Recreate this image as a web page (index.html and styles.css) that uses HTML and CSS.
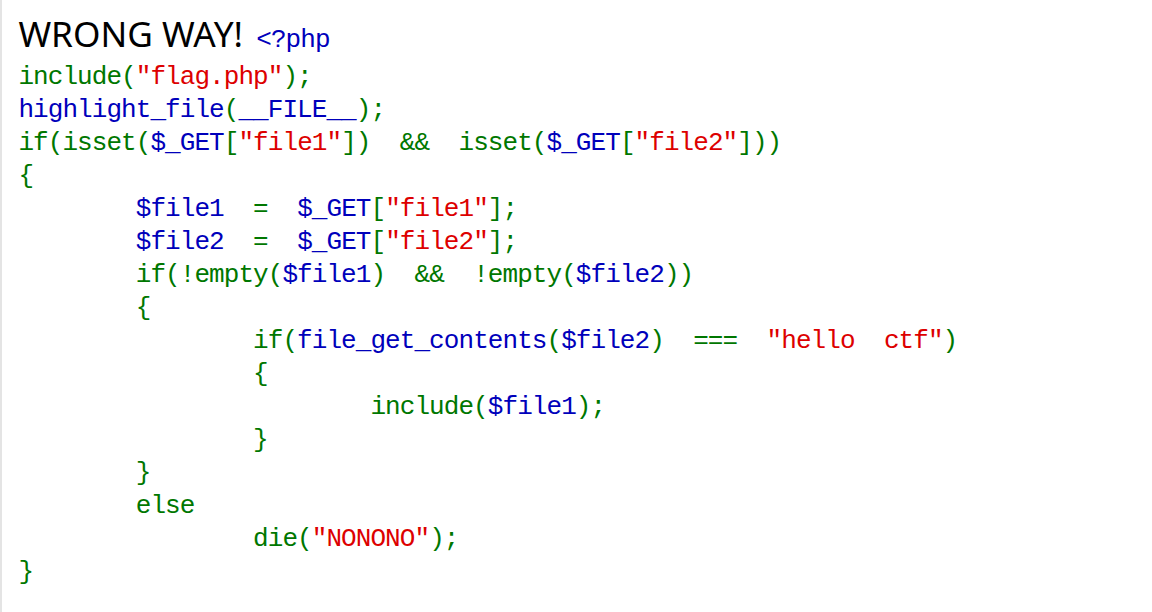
FILE: index.html
```html
<!DOCTYPE html>
<html lang="en">
<head>
<meta charset="utf-8">
<title>WRONG WAY!</title>
<link rel="stylesheet" href="styles.css">
</head>
<body>
<div class="out"><span class="msg">WRONG WAY! </span><code class="src"><span class="d">&lt;?php</span>
<span class="k">include(</span><span class="s">"flag.php"</span><span class="k">);</span>
<span class="d">highlight_file</span><span class="k">(</span><span class="d">__FILE__</span><span class="k">);</span>
<span class="k">if(isset(</span><span class="d">$_GET</span><span class="k">[</span><span class="s">"file1"</span><span class="k">]) &amp;&amp; isset(</span><span class="d">$_GET</span><span class="k">[</span><span class="s">"file2"</span><span class="k">]))</span>
<span class="k">{</span>
<span class="k">    </span><span class="d">$file1</span><span class="k"> = </span><span class="d">$_GET</span><span class="k">[</span><span class="s">"file1"</span><span class="k">];</span>
<span class="k">    </span><span class="d">$file2</span><span class="k"> = </span><span class="d">$_GET</span><span class="k">[</span><span class="s">"file2"</span><span class="k">];</span>
<span class="k">    if(!empty(</span><span class="d">$file1</span><span class="k">) &amp;&amp; !empty(</span><span class="d">$file2</span><span class="k">))</span>
<span class="k">    {</span>
<span class="k">        if(</span><span class="d">file_get_contents</span><span class="k">(</span><span class="d">$file2</span><span class="k">) === </span><span class="s">"hello ctf"</span><span class="k">)</span>
<span class="k">        {</span>
<span class="k">            include(</span><span class="d">$file1</span><span class="k">);</span>
<span class="k">        }</span>
<span class="k">    }</span>
<span class="k">    else</span>
<span class="k">        die(</span><span class="s">"NONONO"</span><span class="k">);</span>
<span class="k">}</span></code></div>
</body>
</html>
```
FILE: styles.css
```css
html {
  background: #ffffff;
}

body {
  margin: 0;
  min-height: 612px;
  box-sizing: border-box;
  border-left: 2px solid #e4e4e4;
}

.out {
  padding: 6px 0 0 16.4px;
  font-family: "Liberation Mono", monospace;
  font-size: 26px;
  line-height: 33px;
  letter-spacing: -0.933px;
  word-spacing: 14.667px;
  color: #000000;
}

.msg {
  margin-right: 4px;
  font-family: "Noto Sans", "Open Sans", sans-serif;
  font-size: 35.2px;
  line-height: 55px;
  letter-spacing: normal;
  word-spacing: normal;
  color: #000000;
}

.src {
  font-family: "Liberation Mono", monospace;
  font-size: 26px;
  white-space: pre;
}

.d {
  color: #0000bb;
}

.k {
  color: #007700;
}

.s {
  color: #dd0000;
}
```
